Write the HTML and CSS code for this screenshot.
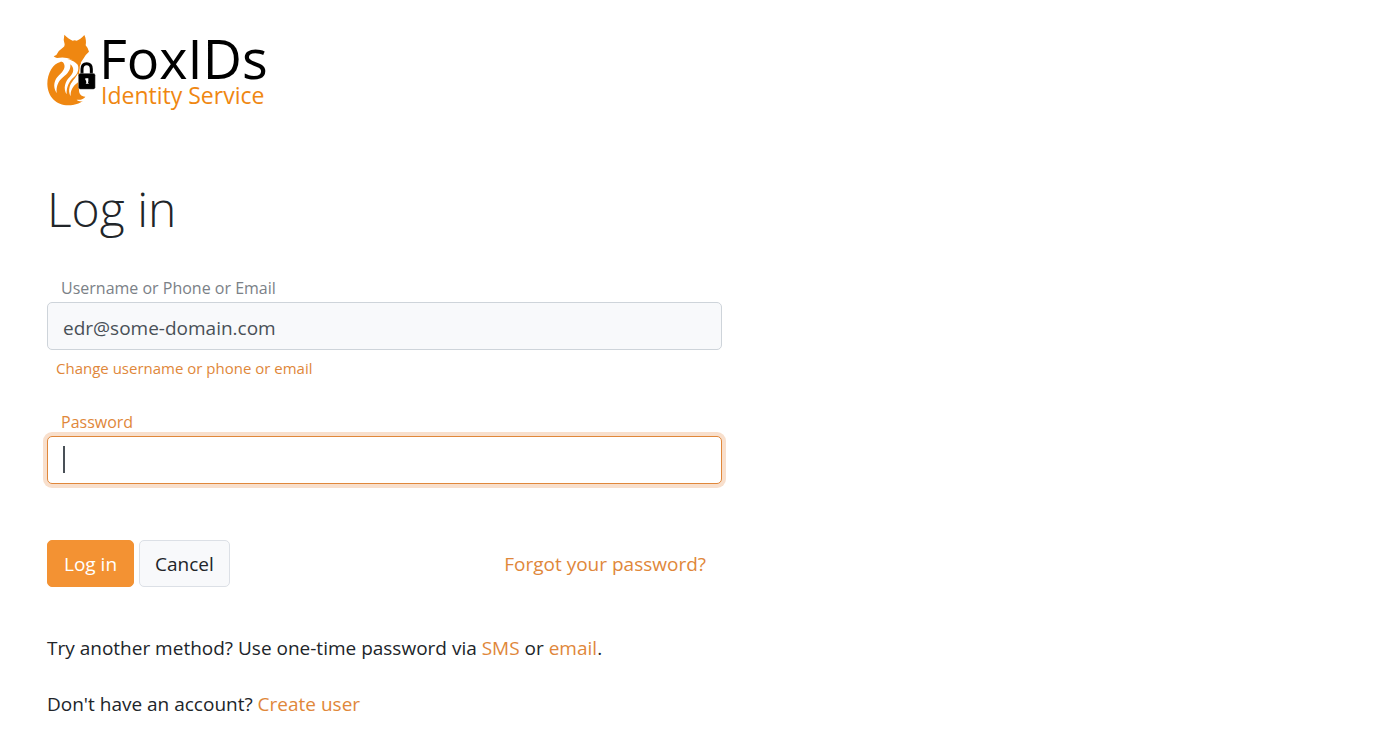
FILE: index.html
```html
<!DOCTYPE html>
<html lang="en">
<head>
<meta charset="utf-8">
<meta name="viewport" content="width=device-width, initial-scale=1">
<title>Log in - FoxIDs</title>
<link rel="stylesheet" href="styles.css">
</head>
<body>
<div class="page">
  <header class="brand">
    <svg class="brand-icon" viewBox="20 20 150 216" aria-hidden="true">
      <path fill="#ef8711" d="M60 104C38 108 21 138 21 170C22 209 48 234 84 234C104 234 117 228 127 222C118 223 112 220 109 217C120 219 131 215 135 208C122 208 115 199 116 186L114 150L122 106L108 96L68 96Z"/>
      <path fill="#fff" d="M46 93C66 90 96 95 112 112C117 124 113 138 101 149C87 161 78 177 79 201C68 184 74 162 88 149C102 136 102 121 90 111C92 127 82 139 68 150C54 161 47 176 49 198C36 176 42 157 56 144C69 132 79 119 68 105L58 101Z"/>
      <path fill="#fff" d="M113 138C106 153 92 164 88 178C85 189 86 198 91 207C90 190 96 177 114 164Z"/>
      <path fill="#ef8711" d="M72 22C80 31 90 37 97 40Q103 38 109 40C117 37 126 31 132 23C137 33 138 44 136 54Q144 63 146 73Q136 81 129 94L118 111C97 93 74 87 50 92Q43 91 40 87L48 83Q56 68 69 60Q73 58 73 51Q68 37 72 22Z"/>
      <path fill="none" stroke="#fff" stroke-width="14" d="M125 143V125Q125 109 139 109Q153 109 153 125V143"/>
      <path fill="none" stroke="#000" stroke-width="9" d="M125 143V125Q125 109 139 109Q153 109 153 125V143"/>
      <rect x="114" y="138" width="51" height="48" rx="6" fill="#000" stroke="#fff" stroke-width="1"/>
      <path fill="#fff" d="M135 153h9v9l-1 4 3 3h-10l2-3-1-7h-2Z"/>
    </svg>
    <div class="brand-text">
      <span class="brand-name">FoxIDs</span>
      <span class="brand-tagline">Identity Service</span>
    </div>
  </header>

  <main class="login">
    <h1 class="title">Log in</h1>
    <form class="form">
      <div class="field">
        <label class="label" for="username">Username or Phone or Email</label>
        <input class="input input-readonly" id="username" type="text" value="edr@some-domain.com" readonly>
        <a class="link change-link" href="#">Change username or phone or email</a>
      </div>
      <div class="field">
        <label class="label label-active" for="password">Password</label>
        <div class="input-wrap">
          <input class="input input-active" id="password" type="password">
          <span class="caret"></span>
        </div>
      </div>
      <div class="actions">
        <button class="btn btn-primary" type="submit">Log in</button>
        <button class="btn btn-light" type="button">Cancel</button>
        <a class="link forgot-link" href="#">Forgot your password?</a>
      </div>
    </form>
    <p class="note">Try another method? Use one-time password via <a class="link" href="#">SMS</a> or <a class="link" href="#">email</a>.</p>
    <p class="note">Don't have an account? <a class="link" href="#">Create user</a></p>
  </main>
</div>
</body>
</html>
```
FILE: styles.css
```css
* {
  box-sizing: border-box;
}

body {
  margin: 0;
  background: #fff;
  color: #212529;
  font-family: "Open Sans", "Noto Sans", sans-serif;
  font-size: 19px;
  line-height: 28px;
}

.page {
  padding: 34px 47px 0;
}

.brand {
  display: flex;
  gap: 2px;
}

.brand-icon {
  width: 50px;
  height: 72px;
}

.brand-text {
  display: flex;
  flex-direction: column;
}

.brand-name {
  color: #000;
  font-size: 54px;
  line-height: 48px;
}

.brand-tagline {
  padding-left: 2px;
  color: #ef8711;
  font-size: 23px;
  line-height: 26px;
}

.login {
  width: calc(50% + 31px);
  padding-top: 72px;
}

.title {
  margin: 0 0 38px;
  font-size: 48px;
  font-weight: 300;
  line-height: 58px;
}

.form {
  margin-bottom: 47px;
}

.field {
  display: flex;
  flex-direction: column;
  margin-bottom: 28px;
}

.label {
  padding: 0 14px 2px;
  color: #7b8187;
  font-size: 16px;
  line-height: 24px;
}

.label-active {
  color: #e0873a;
}

.input-wrap {
  position: relative;
}

.input {
  width: 100%;
  height: 48px;
  padding: 4px 15px 0;
  border: 1px solid #ced4da;
  border-radius: 5px;
  background: #fff;
  color: #495057;
  font: inherit;
  outline: none;
}

.input-readonly {
  background: #f8f9fb;
}

.input-active {
  border-color: #e0873a;
  box-shadow: 0 0 0 4px #f8dfcc;
  caret-color: transparent;
}

.caret {
  position: absolute;
  top: 10px;
  left: 16px;
  width: 2px;
  height: 27px;
  background: #495057;
}

.link {
  color: #e0873a;
  text-decoration: none;
}

.change-link {
  align-self: flex-start;
  margin: 6px 0 2px;
  padding: 0 9px;
  font-size: 15px;
  line-height: 24px;
}

.actions {
  display: flex;
  align-items: center;
  gap: 5px;
  padding-top: 28px;
}

.btn {
  height: 47px;
  padding: 0 15px;
  border: 1px solid #dce0e6;
  border-radius: 5px;
  font: inherit;
}

.btn-primary {
  padding: 0 16px;
  border-color: #f39233;
  background: #f39233;
  color: #fff;
}

.btn-light {
  background: #f8f9fb;
  color: #212529;
}

.forgot-link {
  margin-left: auto;
  padding-right: 16px;
}

.note {
  margin: 0 0 28px;
}
```
